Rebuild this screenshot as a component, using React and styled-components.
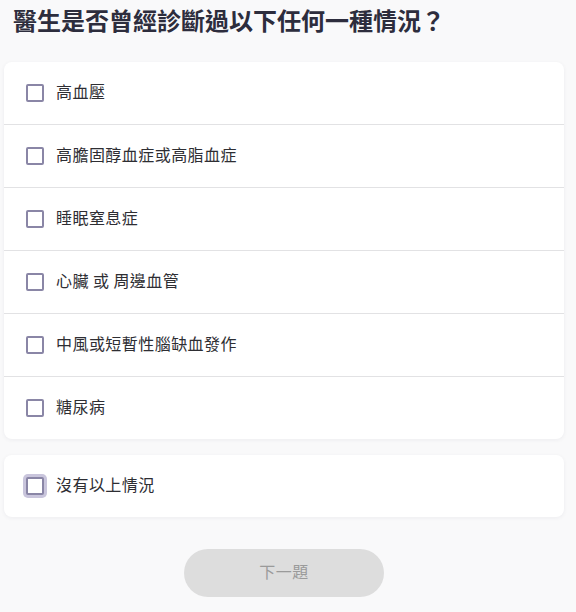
import React, { useState } from 'react'
import styled, { createGlobalStyle } from 'styled-components'

const GlobalStyle = createGlobalStyle`
  html, body {
    margin: 0;
    padding: 0;
    background: #f9f9fa;
  }
  body {
    font-family: "Noto Sans CJK TC", "Noto Sans", sans-serif;
  }
`

const conditions = [
    "高血壓",
    "高膽固醇血症或高脂血症",
    "睡眠窒息症",
    "心臟 或 周邊血管",
    "中風或短暫性腦缺血發作",
    "糖尿病",
]

const App = () => {
    const [checked, setChecked] = useState({})

    const toggle = (key) => setChecked({ ...checked, [key]: !checked[key] })

    return (
        <Page>
            <GlobalStyle />
            <Title>醫生是否曾經診斷過以下任何一種情況？</Title>

            <Card>
                {conditions.map((label) => (
                    <Row key={label} onClick={() => toggle(label)}>
                        <Box $checked={checked[label]} />
                        <Label>{label}</Label>
                    </Row>
                ))}
            </Card>

            <Card>
                <Row onClick={() => toggle("none")}>
                    <Box $focused $checked={checked.none} />
                    <Label>沒有以上情況</Label>
                </Row>
            </Card>

            <Footer>
                <NextButton disabled>下一題</NextButton>
            </Footer>
        </Page>
    )
}

export default App

const Page = styled.div({
    width: "560px",
    marginLeft: "4px",
    display: "flex",
    flexDirection: "column",
})

const Title = styled.h1({
    margin: "0 0 26px 9px",
    paddingTop: "3px",
    fontSize: "24px",
    lineHeight: "33px",
    fontWeight: "700",
    color: "#2d2d3d",
})

const Card = styled.div({
    background: "#ffffff",
    borderRadius: "8px",
    boxShadow: "0 1px 4px rgba(40, 40, 60, 0.06)",
    marginBottom: "16px",
    overflow: "hidden",
})

const Row = styled.div({
    height: "62px",
    display: "flex",
    alignItems: "center",
    gap: "12px",
    padding: "0 22px",
    cursor: "pointer",
    borderBottom: "1px solid #e2e2e4",
    "&:last-child": {
        borderBottom: "none",
    },
})

const Box = styled.span(({ $focused, $checked }) => ({
    boxSizing: "border-box",
    width: "18px",
    height: "18px",
    border: "2px solid #8a86a6",
    borderRadius: "2px",
    background: $checked ? "#8a86a6" : "#ffffff",
    boxShadow: $focused ? "0 0 0 3px #c9c5dc" : "none",
    flexShrink: 0,
}))

const Label = styled.span({
    fontSize: "16px",
    lineHeight: "22px",
    marginBottom: "5px",
    letterSpacing: "0.45px",
    color: "#2e2e33",
})

const Footer = styled.div({
    display: "flex",
    justifyContent: "center",
    paddingTop: "16px",
})

const NextButton = styled.button({
    width: "200px",
    height: "48px",
    paddingBottom: "5px",
    border: "none",
    borderRadius: "24px",
    background: "#dddddd",
    color: "#9a9a9a",
    fontFamily: "inherit",
    fontSize: "16px",
    letterSpacing: "0.5px",
})
